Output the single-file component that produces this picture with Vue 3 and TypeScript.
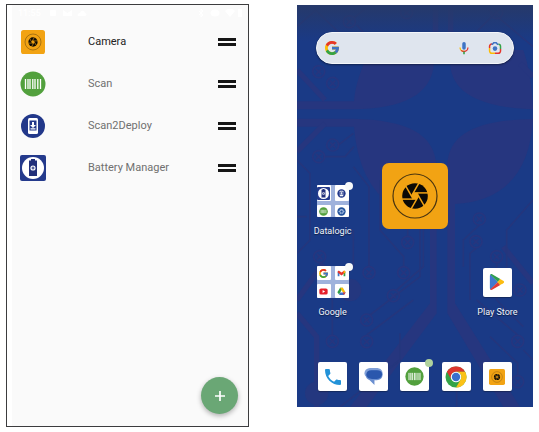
<script setup lang="ts">
interface AppEntry {
  name: string
  icon: string
  active?: boolean
}

interface Folder {
  name: string
  tiles: string[]
}

const entries: AppEntry[] = [
  { name: 'Camera', icon: 'i-camera', active: true },
  { name: 'Scan', icon: 'i-scan' },
  { name: 'Scan2Deploy', icon: 'i-deploy' },
  { name: 'Battery Manager', icon: 'i-battery' },
]

const datalogic: Folder = { name: 'Datalogic', tiles: ['i-battery', 'i-deploy', 'i-scan', 'i-settings'] }
const google: Folder = { name: 'Google', tiles: ['i-google', 'i-gmail', 'i-youtube', 'i-drive'] }

const dock: (AppEntry & { badge?: boolean })[] = [
  { name: 'Phone', icon: 'i-phone' },
  { name: 'Messages', icon: 'i-messages' },
  { name: 'Scan', icon: 'i-scan', badge: true },
  { name: 'Chrome', icon: 'i-chrome' },
  { name: 'Camera', icon: 'i-camera' },
]

const blades = [0, 60, 120, 180, 240, 300]

const nodes: [number, number][] = [
  [178, 65], [86, 215], [128, 250], [128, 435], [86, 470], [353, 727], [237, 818], [341, 818],
  [310, 887], [230, 960], [127, 1024], [230, 1025], [89, 770], [568, 657], [558, 725], [620, 770],
  [683, 1024], [683, 1145], [620, 38], [350, 38], [690, 870],
]
</script>

<template>
  <svg class="sprite" aria-hidden="true">
    <symbol id="i-camera" viewBox="0 0 66 66">
      <rect width="66" height="66" rx="7" fill="#f2a313" />
      <circle cx="33" cy="33" r="22" fill="none" stroke="#4a3510" stroke-width="1.2" />
      <circle cx="33" cy="33" r="12.8" fill="#0c0a06" />
      <g transform="translate(33 33)">
        <path d="M-1.8-3.1h3.6L3.6 0 1.8 3.1h-3.6L-3.6 0z" fill="#f2a313" />
        <path
          v-for="a in blades"
          :key="a"
          d="M-1.8-3.1H13.4"
          :transform="`rotate(${a})`"
          stroke="#f2a313"
          stroke-width="1.5"
        />
      </g>
    </symbol>
    <symbol id="i-scan" viewBox="0 0 26 26">
      <circle cx="13" cy="13" r="12.5" fill="#52a03d" />
      <path
        d="M5.5 8v10M8 8v10M10 8v10M12.8 8v10M15 8v10M17.8 8v10M20.5 8v10"
        stroke="#fff"
        stroke-width="1.3"
      />
    </symbol>
    <symbol id="i-deploy" viewBox="0 0 26 26">
      <circle cx="13" cy="13" r="12" fill="#22388a" />
      <rect x="8" y="5" width="10" height="16" rx="1.5" fill="#fff" />
      <path d="M9.5 7.5h7v10h-7z" fill="#22388a" />
      <path d="M12 9h2v3h2l-3 3-3-3h2zM10.5 15.2h5v1.2h-5z" fill="#fff" />
    </symbol>
    <symbol id="i-battery" viewBox="0 0 26 26">
      <rect width="26" height="26" rx="2" fill="#243a8c" />
      <circle cx="13" cy="13" r="11" fill="#fff" />
      <path d="M11 4h4v1.5h2V21H9V5.500h2z" fill="#22307a" />
      <circle cx="13" cy="13" r="2.600" fill="#fff" />
      <path d="M13 11.500v3M11.500 13h3" stroke="#22307a" />
    </symbol>
    <symbol id="i-settings" viewBox="0 0 26 26">
      <circle cx="13" cy="13" r="12" fill="#23539c" />
      <circle cx="13" cy="13" r="5" fill="none" stroke="#cfdcf2" stroke-width="3" stroke-dasharray="3 1" />
      <path d="M4 13h5M17 13h5M9 6l2 4M17 6l-2 4M9 20l2-4M17 20l-2-4" stroke="#9fb9e2" stroke-width="2" />
    </symbol>
    <symbol id="i-google" viewBox="4 4 40 40">
      <path fill="#fbbc05" d="M43.611 20.083H42V20H24v8h11.303c-1.649 4.657-6.080 8-11.303 8-6.627 0-12-5.373-12-12s5.373-12 12-12c3.059 0 5.842 1.154 7.961 3.039l5.657-5.657C34.046 6.053 29.268 4 24 4 12.955 4 4 12.955 4 24s8.955 20 20 20 20-8.955 20-20c0-1.341-.138-2.650-.389-3.917z" />
      <path fill="#e5352c" d="M6.306 14.691l6.571 4.819C14.655 15.108 18.961 12 24 12c3.059 0 5.842 1.154 7.961 3.039l5.657-5.657C34.046 6.053 29.268 4 24 4 16.318 4 9.656 8.337 6.306 14.691z" />
      <path fill="#34a347" d="M24 44c5.166 0 9.860-1.977 13.409-5.192l-6.190-5.238C29.211 35.091 26.715 36 24 36c-5.202 0-9.619-3.317-11.283-7.946l-6.522 5.025C9.505 39.556 16.227 44 24 44z" />
      <path fill="#3f74c4" d="M43.611 20.083H24v8h11.303c-.792 2.237-2.231 4.166-4.087 5.571l6.190 5.238C36.971 39.205 44 34 44 24c0-1.341-.138-2.650-.389-3.917z" />
    </symbol>
    <symbol id="i-gmail" viewBox="0 0 26 26">
      <path d="M2 7v14h5V11z" fill="#3f74c4" />
      <path d="M24 7v14h-5V11z" fill="#34a347" />
      <path d="M2 8c0-3 3-4 5-2.500l6 4.500 6-4.500C21 4 24 5 24 8v2l-11 8.500L2 10z" fill="#e5352c" />
      <path d="M19 5.500C21 4 24 5 24 8v2l-5 4z" fill="#fbbc05" />
    </symbol>
    <symbol id="i-youtube" viewBox="0 0 26 26">
      <rect x="1" y="4" width="24" height="18" rx="5" fill="#e5202b" />
      <path d="M10.500 9v8l7-4z" fill="#fff" />
    </symbol>
    <symbol id="i-drive" viewBox="0 0 26 26">
      <path d="M9 2h8l-11 20-5-7z" fill="#2e9e47" />
      <path d="M9 2h8l8 14h-8z" fill="#fbbc05" />
      <path d="M9 16h16l-5 7H6z" fill="#3d70c8" />
      <path d="M20 23l5-7h-8z" fill="#e5352c" />
    </symbol>
    <symbol id="i-mic" viewBox="0 0 12 16">
      <path d="M1.500 7.500c0 2.500 2 4.500 4.500 4.500" fill="none" stroke="#fbbc05" stroke-width="1.500" />
      <path d="M10.500 7.500c0 2.500-2 4.500-4.500 4.500-1.300 0-2.400-.5-3.200-1.300" fill="none" stroke="#e5352c" stroke-width="1.500" />
      <path d="M6 12v3" stroke="#34a347" stroke-width="1.800" />
      <rect x="4" y="1" width="4" height="9" rx="2" fill="#3f74c4" />
    </symbol>
    <symbol id="i-lens" viewBox="0 0 16 16">
      <g fill="none" stroke-width="1.700">
        <path d="M1.800 8V6a2.500 2.500 0 0 1 2.500-2.500H5" stroke="#e5352c" />
        <path d="M4 3.600h1.200L6.500 2h3l1.300 1.600H12" stroke="#3f74c4" />
        <path d="M12 3.600a2.400 2.400 0 0 1 2.300 2.400v3" stroke="#34a347" />
        <path d="M14.300 9v2.500a2.500 2.500 0 0 1-2.500 2.500H8" stroke="#e5352c" />
        <path d="M1.800 8v3.500A2.500 2.500 0 0 0 4.300 14H8" stroke="#fbbc05" />
      </g>
      <circle cx="8" cy="8.700" r="2.600" fill="#3f74c4" />
    </symbol>
    <symbol id="i-phone" viewBox="3 3 18 18">
      <path fill="#2292d8" d="M6.620 10.790c1.440 2.830 3.760 5.140 6.590 6.590l2.200-2.200c.27-.27.67-.36 1.020-.24 1.120.37 2.330.57 3.570.57.55 0 1 .45 1 1V20c0 .55-.45 1-1 1-9.390 0-17-7.610-17-17 0-.55.45-1 1-1h3.500c.55 0 1 .45 1 1 0 1.250.2 2.450.57 3.570.11.35.03.74-.25 1.020z" />
    </symbol>
    <symbol id="i-messages" viewBox="0 0 20 20">
      <path d="M8 1h5c4 0 6.500 2.200 6.500 5.500S17 12 13 12H8C3.500 12 .5 10 .5 6.500S3.500 1 8 1z" fill="#7f9fd8" />
      <path d="M8.500 3.500h5c3.500 0 6 2 6 5s-2.500 5.500-6 5.500H11v5l-5-5C3 13 2 11 2 9c0-3.500 3-5.500 6.500-5.500z" fill="#6b8fd0" />
      <path d="M8 3.500h5.500c3.500 0 5.500 1.500 5.500 4.200S17 12.500 13.500 12.500H8.500C5 12.500 2.500 11 2.500 8S4.500 3.500 8 3.500z" fill="#2a57ad" />
    </symbol>
    <symbol id="i-chrome" viewBox="0 0 22 22">
      <circle cx="11" cy="11" r="10.500" fill="#34a347" />
      <path d="M1.900 5.750A10.500 10.500 0 0 1 20.100 5.750H11a5.250 5.250 0 0 0-4.550 7.900z" fill="#dc352d" />
      <path d="M20.100 5.750A10.500 10.500 0 0 1 11 21.500l4.550-7.870A5.250 5.250 0 0 0 11 5.750z" fill="#fbc116" />
      <circle cx="11" cy="11" r="5.250" fill="#fff" />
      <circle cx="11" cy="11" r="4.200" fill="#3a70cc" />
    </symbol>
    <symbol id="i-play" viewBox="0 0 18 20">
      <path d="M2 1.500L10 10l-8 8.500C1.300 18 1 17.500 1 17V3c0-.7.300-1.200 1-1.500z" fill="#4279cf" />
      <path d="M1.300 1.700C2 .8 3 .9 4 1.500l8.700 5L10 10z" fill="#2f9e50" />
      <path d="M1.300 18.300c.7.900 1.700.8 2.700.2l8.700-5L10 10z" fill="#e23a35" />
      <path d="M12.500 6.500l3.500 2c1.300.8 1.300 2.200 0 3l-3.500 2L9.500 10z" fill="#fbbc12" />
    </symbol>
  </svg>

  <main class="page">
    <section class="picker" aria-label="Applications">
      <div class="screen">
        <header class="status">
          <span class="clock">11:55</span>
          <svg class="status-left" viewBox="0 0 38 8" aria-hidden="true">
            <rect x="1" y="1" width="6" height="6" rx="1" />
            <path d="M14 1l4.500 3L23 1v6h-9zM29 7c-1-2 1-3 2-3 1-4 5-2 5 0 2 0 2 3 0 3z" />
          </svg>
          <svg class="status-right" viewBox="0 0 46 10" aria-hidden="true">
            <path d="M2 3l4 4-2 2V1l2 2-4 4" fill="none" stroke="#fff" />
            <ellipse cx="18" cy="5" rx="4.500" ry="3.500" />
            <path d="M28 3c3-3 7-3 10 0l-5 6zM41 1h4v8h-4z" />
          </svg>
        </header>
        <ul class="list">
          <li v-for="entry in entries" :key="entry.name" class="row" :class="{ active: entry.active }">
            <svg class="row-icon"><use :href="`#${entry.icon}`" /></svg>
            <span class="row-name">{{ entry.name }}</span>
            <button class="handle" type="button" :aria-label="`Reorder ${entry.name}`"></button>
          </li>
        </ul>
      </div>
      <button class="fab" type="button" aria-label="Add application">
        <svg viewBox="0 0 12 12"><path d="M6 1v10M1 6h10" stroke="#fff" stroke-width="1.700" /></svg>
      </button>
    </section>

    <section class="home" aria-label="Home screen">
      <svg class="wallpaper" viewBox="21 15 708 1206" preserveAspectRatio="xMidYMid slice" aria-hidden="true">
        <defs>
          <linearGradient id="shade" x1="0" y1="0" x2="0" y2="1">
            <stop offset="0" stop-color="#26396a" />
            <stop offset="1" stop-color="#26396a" stop-opacity="0" />
          </linearGradient>
        </defs>
        <rect x="21" y="15" width="708" height="1206" fill="#1a3a86" />
        <g fill="#26367f">
          <path d="M21 304H192Q196 240 240 150H432V190C425 285 340 326 190 328H21z" />
          <path d="M480 150H700Q724 220 729 328C570 322 485 280 480 190z" />
          <path d="M21 356H190C350 360 435 400 440 500V940L230 1221H180L420 910V620H310Q205 550 192 380H21z" />
          <path d="M729 357C560 360 480 400 472 490V940L640 1221H690L495 910V612Q715 600 729 357z" />
          <path d="M428 15h17v80h-17zM474 15h16v80h-16z" />
        </g>
        <g fill="none" stroke="#26367f" stroke-width="16">
          <path d="M21 210L105 300M21 455L105 370M729 850L640 740M21 900L100 790M729 230L690 190" />
          <path d="M80 1221V1010L21 940M590 200L560 140" />
        </g>
        <g fill="none" stroke="#24367d" stroke-width="5">
          <path d="M21 80L95 15M60 15L160 110M190 55L240 15M200 75L240 120M580 15L729 140M560 95L640 15" />
          <path d="M21 480L60 520V720L21 760M100 470H165L192 440M145 435L190 400M237 800V560L190 500" />
          <path d="M353 710V690L290 620M341 800V770L270 690V540M320 870L400 800V650M240 945L390 830V640" />
          <path d="M127 1005V880L190 800V690M230 1005L370 900M568 675L520 720V800M558 745L540 760V900" />
          <path d="M620 790V900L700 980M683 1005L560 900M683 1125V1090L600 1010M21 650H50M729 600L650 690V840" />
          <path d="M150 1221L330 1080V1000M500 1221V1080M729 1080L700 1050" />
        </g>
        <g v-for="([x, y], i) in nodes" :key="i" fill="none" stroke="#26367f" stroke-width="5">
          <circle :cx="x" :cy="y" r="18" />
          <path :d="`M${x - 8} ${y - 8}l16 16m0-16l-16 16`" />
        </g>
        <g fill="#24377f">
          <circle cx="180" cy="870" r="34" />
          <circle cx="80" cy="1180" r="35" />
        </g>
        <rect x="21" y="15" width="708" height="110" fill="url(#shade)" />
      </svg>

      <form class="search" role="search" @submit.prevent>
        <svg class="search-icon"><use href="#i-google" /></svg>
        <input class="search-input" type="search" aria-label="Search" />
        <button class="search-button" type="button" aria-label="Voice search">
          <svg class="search-icon"><use href="#i-mic" /></svg>
        </button>
        <button class="search-button" type="button" aria-label="Google Lens">
          <svg class="search-icon"><use href="#i-lens" /></svg>
        </button>
      </form>

      <div class="apps">
        <button class="app" type="button">
          <span class="folder">
            <span v-for="tile in datalogic.tiles" :key="tile" class="tile" :class="{ full: tile === 'i-battery' }">
              <svg><use :href="`#${tile}`" /></svg>
            </span>
            <span class="badge"></span>
          </span>
          <span class="label">{{ datalogic.name }}</span>
        </button>
        <button class="widget" type="button" aria-label="Camera">
          <svg><use href="#i-camera" /></svg>
        </button>
        <button class="app google" type="button">
          <span class="folder">
            <span v-for="tile in google.tiles" :key="tile" class="tile">
              <svg><use :href="`#${tile}`" /></svg>
            </span>
            <span class="badge"></span>
          </span>
          <span class="label">{{ google.name }}</span>
        </button>
        <button class="app store" type="button">
          <span class="slot">
            <span class="card"><svg class="play"><use href="#i-play" /></svg></span>
          </span>
          <span class="label">Play Store</span>
        </button>
      </div>

      <nav class="dock" aria-label="Dock">
        <button v-for="app in dock" :key="app.name" class="card" type="button" :aria-label="app.name">
          <svg :class="app.icon"><use :href="`#${app.icon}`" /></svg>
          <span v-if="app.badge" class="badge green"></span>
        </button>
      </nav>
    </section>
  </main>
</template>

<style>
body {
  background: #fff;
}
</style>

<style scoped>
* {
  box-sizing: border-box;
}

button {
  margin: 0;
  padding: 0;
  border: 0;
  background: none;
  font: inherit;
  color: inherit;
  cursor: pointer;
}

svg {
  display: block;
}

.sprite {
  position: absolute;
  width: 0;
  height: 0;
}

.page {
  display: grid;
  grid-template-columns: 243fr 236fr;
  align-items: start;
  gap: 48px;
  padding: 4px 6px;
  font-family: Roboto, "Liberation Sans", sans-serif;
}

.picker {
  position: relative;
  min-height: 423px;
  display: flex;
  padding-left: 5px;
  border: 1px solid #3c3c3e;
  background: #fff;
}

.screen {
  flex: 1;
  background: #fafafa;
}

.status {
  display: flex;
  align-items: center;
  gap: 8px;
  height: 16px;
  padding: 0 5px 0 6px;
  color: #fff;
}

.status svg {
  fill: #fff;
}

.clock {
  font-size: 9px;
  font-weight: 500;
  line-height: 16px;
}

.status-left {
  width: 38px;
  height: 8px;
}

.status-right {
  width: 46px;
  height: 10px;
  margin-left: auto;
}

.list {
  margin: 0;
  padding: 0;
  list-style: none;
}

.row {
  display: flex;
  align-items: center;
  height: 42px;
  padding: 0 12px 0 8px;
  color: #707070;
  font-size: 11px;
  line-height: 16px;
}

.row.active {
  color: #222;
}

.row-icon {
  width: 26px;
  height: 26px;
}

.row.active .row-icon {
  padding: 1px;
}

.row-name {
  flex: 1;
  padding-left: 42px;
}

.handle {
  width: 18px;
  height: 8px;
  border: solid #161616;
  border-width: 3px 0;
}

.fab {
  position: absolute;
  right: 10px;
  bottom: 12px;
  width: 37px;
  height: 37px;
  display: grid;
  place-items: center;
  border-radius: 50%;
  background: #6aa775;
  box-shadow: 0 2px 5px rgba(0, 0, 0, 0.3);
}

.fab svg {
  width: 12px;
  height: 12px;
}

.home {
  position: relative;
  isolation: isolate;
  margin-top: 1px;
  padding: 27px 15px 16px;
  overflow: hidden;
  color: #f2f5fb;
}

.wallpaper {
  position: absolute;
  inset: 0;
  z-index: -1;
  width: 100%;
  height: 100%;
}

.search {
  display: flex;
  align-items: center;
  height: 32px;
  margin: 0 4px;
  padding: 0 11px 0 8px;
  border: 1px solid #f4f6fa;
  border-radius: 16px;
  background: #dfe5ee;
  box-shadow: 0 1px 2px rgba(0, 0, 0, 0.4);
}

.search-icon {
  width: 14px;
  height: 14px;
}

.search-input {
  flex: 1;
  min-width: 0;
  padding: 0 8px;
  border: 0;
  outline: 0;
  background: none;
  font: inherit;
  font-size: 11px;
}

.search-button + .search-button {
  margin-left: 17px;
}

.apps {
  display: grid;
  grid-template-columns: repeat(5, 1fr);
  grid-template-rows: 76px 81px;
  align-items: end;
  margin-top: 99px;
}

.app {
  display: flex;
  flex-direction: column;
  align-items: center;
  gap: 6px;
}

.widget {
  grid-column: 2 / 5;
  align-self: start;
  justify-self: center;
}

.widget svg {
  width: 66px;
  height: 66px;
}

.google {
  grid-column: 1;
}

.store {
  grid-column: 5;
}

.label {
  font-size: 9px;
  line-height: 16px;
  white-space: nowrap;
  text-shadow: 0 1px 1px rgba(0, 0, 0, 0.5);
}

.folder {
  position: relative;
  display: grid;
  grid-template-columns: 1fr 1fr;
  gap: 4px;
  width: 32px;
  height: 32px;
  border-radius: 2px;
  background: #9fb2dc;
}

.tile {
  display: grid;
  place-items: center;
  border-radius: 1px;
  background: #fff;
}

.tile svg {
  width: 9px;
  height: 9px;
}

.tile.full svg {
  width: 13px;
  height: 13px;
}

.badge {
  position: absolute;
  top: -3px;
  right: -4px;
  width: 8px;
  height: 8px;
  border-radius: 50%;
  background: #f7f9f9;
}

.badge.green {
  background: #afd29d;
}

.slot {
  display: grid;
  place-items: center;
  height: 32px;
}

.card {
  position: relative;
  display: grid;
  place-items: center;
  width: 29px;
  height: 29px;
  border-radius: 2px;
  background: #fff;
  box-shadow: 0 1px 1px rgba(0, 0, 0, 0.3);
}

.play {
  width: 16px;
  height: 18px;
}

.dock {
  display: grid;
  grid-template-columns: repeat(5, 1fr);
  justify-items: center;
  margin-top: 42px;
}

.i-phone,
.i-camera {
  width: 16px;
  height: 16px;
}

.i-messages,
.i-scan {
  width: 19px;
  height: 19px;
}

.i-chrome {
  width: 22px;
  height: 22px;
}
</style>
